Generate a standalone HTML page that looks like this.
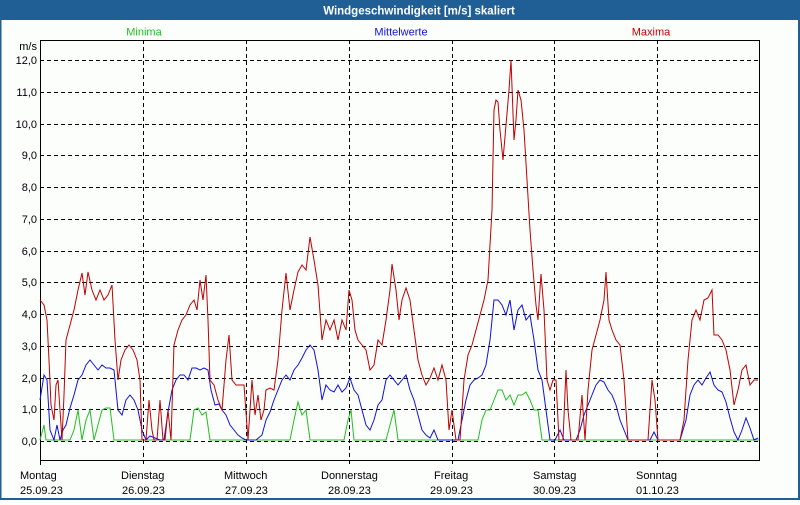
<!DOCTYPE html>
<html><head><meta charset="utf-8"><style>
body{margin:0;width:800px;height:500px;overflow:hidden;background:#fff;font-family:"Liberation Sans",sans-serif;}
</style></head><body>
<svg width="800" height="500" xmlns="http://www.w3.org/2000/svg" font-family="Liberation Sans, sans-serif" font-size="11">
<rect x="0" y="0" width="800" height="500" fill="#fcfefc"/>
<rect x="0" y="0" width="800" height="20" fill="#1f5f96"/>
<rect x="0" y="0" width="1.5" height="500" fill="#1f5f96"/>
<rect x="798" y="0" width="2" height="500" fill="#1f5f96"/>
<rect x="0" y="498" width="800" height="2" fill="#1f5f96"/>
<text x="419" y="14.5" text-anchor="middle" fill="#fff" font-weight="bold" font-size="11.5">Windgeschwindigkeit [m/s] skaliert</text>
<text x="144" y="35.5" text-anchor="middle" fill="#20c020">Minima</text>
<text x="401" y="35.5" text-anchor="middle" fill="#1010e0">Mittelwerte</text>
<text x="651" y="35.5" text-anchor="middle" fill="#c00000">Maxima</text>
<g fill="#000" text-anchor="end">
<text x="37" y="50">m/s</text>
<text x="37" y="64">12,0</text><text x="37" y="96">11,0</text><text x="37" y="128">10,0</text><text x="37" y="159">9,0</text><text x="37" y="191">8,0</text><text x="37" y="223">7,0</text><text x="37" y="255">6,0</text><text x="37" y="286">5,0</text><text x="37" y="318">4,0</text><text x="37" y="350">3,0</text><text x="37" y="382">2,0</text><text x="37" y="413">1,0</text><text x="37" y="445">0,0</text>
</g>
<g stroke="#000" stroke-width="1" stroke-dasharray="4,3" shape-rendering="crispEdges">
<path d="M40 60.5H760M40 92.5H760M40 124.5H760M40 155.5H760M40 187.5H760M40 219.5H760M40 251.5H760M40 282.5H760M40 314.5H760M40 346.5H760M40 378.5H760M40 409.5H760M40 441.5H760"/>
<path d="M143.5 40V465M246.5 40V465M349.5 40V465M452.5 40V465M554.5 40V465M657.5 40V465"/>
</g>
<rect x="40.5" y="40.5" width="719" height="420" fill="none" stroke="#000" shape-rendering="crispEdges"/>
<path d="M40.5 460V465" stroke="#000" shape-rendering="crispEdges"/>
<polyline fill="none" stroke="#20c020" stroke-width="1" points="40,440 44,425 46,440 70,440 74,430 78,410 82,440 86,420 90,410 94,440 98,425 102,410 106,408 110,408 114,440 190,440 194,410 198,408 202,415 206,412 210,440 290,440 294,420 298,402 302,415 306,410 310,440 344,440 348,420 351,410 354,440 386,440 390,425 394,410 398,440 478,440 482,420 486,410 490,410 494,400 498,390 502,390 506,400 510,395 514,405 518,395 522,395 526,392 530,400 534,410 538,410 542,440 759,440"/>
<polyline fill="none" stroke="#1010e0" stroke-width="1" points="40,400 44,375 47,380 50,430 54,440 57,425 60,440 63,430 66,425 70,408 74,395 78,380 82,375 86,365 90,360 94,365 98,370 102,365 106,368 110,368 114,370 118,410 122,415 126,400 130,395 134,400 138,410 142,430 146,440 150,436 155,438 160,440 164,440 168,412 172,390 176,380 180,375 184,375 188,380 192,368 196,368 200,370 204,368 208,370 211,390 215,405 219,404 222,410 226,415 230,425 234,430 238,435 242,438 246,440 256,440 262,435 266,420 270,412 274,400 278,390 282,380 286,375 290,380 294,370 298,365 302,358 306,350 310,345 314,350 318,370 322,400 326,385 330,390 334,392 338,385 342,392 346,388 350,378 354,390 358,395 362,410 366,425 370,430 374,420 378,405 382,400 386,380 390,375 394,380 398,385 402,380 406,375 410,390 414,400 418,415 422,430 426,435 430,438 434,430 438,440 458,440 462,420 466,400 470,385 474,380 478,378 482,375 486,365 490,340 494,300 498,300 502,305 506,315 510,300 514,330 518,310 522,305 526,320 530,315 534,340 538,370 542,380 546,410 550,440 555,440 560,430 564,440 576,440 580,430 584,415 588,405 592,395 596,385 600,380 604,382 608,390 612,395 616,405 620,420 624,430 628,440 650,440 654,432 658,440 680,440 686,420 690,395 694,385 698,380 702,385 706,378 710,372 714,385 718,390 722,392 726,402 730,418 734,432 738,440 742,430 746,418 750,428 754,440 758,438"/>
<polyline fill="none" stroke="#c00000" stroke-width="1" points="40,300 44,305 47,320 49,360 51,405 54,420 56,385 58,380 60,410 62,440 64,395 66,340 70,325 74,310 78,290 82,273 85,295 88,272 92,290 96,300 100,290 104,300 108,295 112,285 115,340 118,380 121,360 125,350 129,345 133,350 137,360 140,380 142,440 146,440 149,400 152,430 154,440 157,440 160,400 163,440 165,440 168,410 171,440 174,345 178,330 182,320 186,315 190,305 194,300 197,310 200,280 203,300 206,275 208,320 210,380 214,385 218,400 222,410 226,360 229,335 232,380 236,385 244,385 248,440 252,380 255,415 258,395 261,420 264,410 266,390 270,388 274,390 278,360 282,310 286,273 290,310 294,290 298,272 302,265 306,270 310,237 314,260 318,285 322,340 326,320 330,330 334,320 338,340 342,320 346,330 349,290 352,300 355,330 358,340 362,345 366,350 370,370 374,365 378,340 382,345 386,320 390,290 392,264 396,290 399,320 402,300 406,288 410,300 414,330 418,360 422,375 426,385 430,378 434,368 438,380 442,365 446,380 449,430 452,410 456,440 460,440 464,380 468,355 472,345 476,330 480,315 484,300 488,280 492,210 494,110 496,100 498,102 500,130 503,160 506,125 509,90 511,60 514,140 516,120 518,90 521,100 524,130 527,180 530,230 533,270 536,305 538,320 541,274 544,310 547,380 550,390 553,380 556,380 559,440 563,440 566,370 568,410 571,440 578,440 582,395 585,440 588,390 592,350 596,335 600,320 604,300 606,272 609,320 612,330 616,340 620,345 624,380 628,440 648,440 652,380 655,400 658,440 680,440 684,420 688,360 692,320 696,310 700,320 704,300 708,298 712,290 714,335 718,335 722,340 726,350 730,370 734,405 738,390 742,370 746,365 750,385 754,380 758,380"/>
<g fill="#000">
<text x="20" y="479">Montag</text><text x="20" y="494">25.09.23</text>
<text x="121" y="479">Dienstag</text><text x="122" y="494">26.09.23</text>
<text x="224" y="479">Mittwoch</text><text x="225" y="494">27.09.23</text>
<text x="321" y="479">Donnerstag</text><text x="328" y="494">28.09.23</text>
<text x="434" y="479">Freitag</text><text x="430" y="494">29.09.23</text>
<text x="533" y="479">Samstag</text><text x="533" y="494">30.09.23</text>
<text x="636" y="479">Sonntag</text><text x="636" y="494">01.10.23</text>
</g>
</svg>
</body></html>
